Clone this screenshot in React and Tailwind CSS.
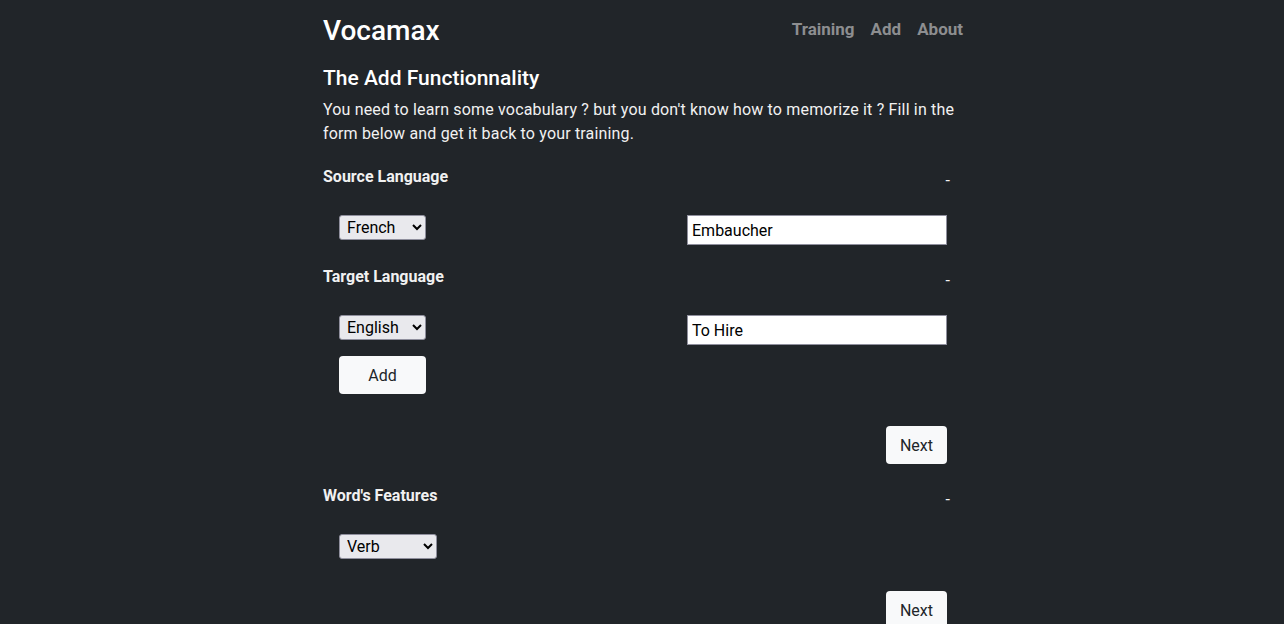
import React from 'react';

const font = { fontFamily: 'Roboto, "Liberation Sans", sans-serif' };

const selectClass =
  'h-[25px] pl-[3px] bg-[#e9e9ed] text-black text-[16px] leading-none border border-[#8f8f9d] rounded-[3px]';
const inputClass =
  'w-[260px] h-[30px] px-[4px] bg-white text-black text-[16px] border border-[#8f8f9d] outline-none';
const btnClass =
  'h-[38px] pt-[1px] bg-[#f8f9fa] text-[#212529] text-[16px] rounded-[4px] flex items-center justify-center';

function SectionTitle({ children }) {
  return (
    <div className="flex items-center justify-between h-6">
      <h3 className="text-[16px] font-bold leading-6">{children}</h3>
      <span className="text-[16px] pr-[13px] pt-[8px] leading-none">-</span>
    </div>
  );
}

export default function App() {
  const [source, setSource] = React.useState('French');
  const [target, setTarget] = React.useState('English');
  const [word, setWord] = React.useState('Embaucher');
  const [translation, setTranslation] = React.useState('To Hire');
  const [kind, setKind] = React.useState('Verb');

  return (
    <div style={font} className="min-h-screen bg-[#212529] text-[#f1f1f1]">
      <div className="max-w-[642px] mx-auto pl-[2px]">
        {/* navbar */}
        <nav className="h-[62px] flex items-center justify-between">
          <a className="text-[28px] text-white leading-none font-medium">Vocamax</a>
          <div className="flex gap-[16px] text-[17px] font-bold text-[#8d8e90] -mt-[2px]">
            <a>Training</a>
            <a>Add</a>
            <a>About</a>
          </div>
        </nav>

        <h2 className="mt-[1px] text-[21px] leading-[30px] font-medium text-white">The Add Functionnality</h2>
        <p className="mt-[5px] text-[16px] leading-6 tracking-[0.17px]">
          You need to learn some vocabulary ? but you don't know how to memorize it ? Fill in the form below and
          get it back to your training.
        </p>

        {/* source */}
        <div className="mt-[19px]">
          <SectionTitle>Source Language</SectionTitle>
          <div className="mt-[26px] flex items-start justify-between px-4">
            <select value={source} onChange={(e) => setSource(e.target.value)} className={`${selectClass} w-[87px]`}>
              <option>French</option>
              <option>English</option>
              <option>Spanish</option>
            </select>
            <input value={word} onChange={(e) => setWord(e.target.value)} className={inputClass} />
          </div>
        </div>

        {/* target */}
        <div className="mt-[20px]">
          <SectionTitle>Target Language</SectionTitle>
          <div className="mt-[26px] flex items-start justify-between px-4">
            <div className="flex flex-col gap-4">
              <select value={target} onChange={(e) => setTarget(e.target.value)} className={`${selectClass} w-[87px]`}>
                <option>English</option>
                <option>French</option>
                <option>Spanish</option>
              </select>
              <button className={`${btnClass} w-[87px]`}>Add</button>
            </div>
            <input value={translation} onChange={(e) => setTranslation(e.target.value)} className={inputClass} />
          </div>
          <div className="mt-8 flex justify-end px-4">
            <button className={`${btnClass} w-[61px]`}>Next</button>
          </div>
        </div>

        {/* features */}
        <div className="mt-[20px]">
          <SectionTitle>Word's Features</SectionTitle>
          <div className="mt-[26px] px-4">
            <select value={kind} onChange={(e) => setKind(e.target.value)} className={`${selectClass} w-[98px] h-[24px]`}>
              <option>Verb</option>
              <option>Noun</option>
              <option>Adjective</option>
            </select>
          </div>
          <div className="mt-[32px] flex justify-end px-4 pb-6">
            <button className={`${btnClass} w-[61px]`}>Next</button>
          </div>
        </div>
      </div>
    </div>
  );
}
